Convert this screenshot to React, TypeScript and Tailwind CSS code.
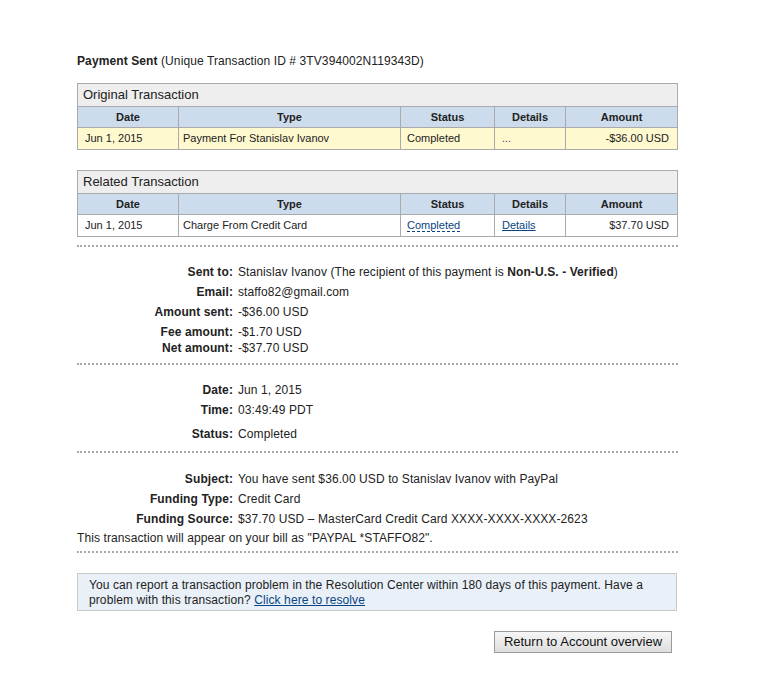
import React from 'react';

interface TxRow {
  date: string;
  type: string;
  status: React.ReactNode;
  details: React.ReactNode;
  amount: string;
}

const font = { fontFamily: '"Liberation Sans", Arial, sans-serif' };

const headers = ['Date', 'Type', 'Status', 'Details', 'Amount'];

const TxTable: React.FC<{ title: string; row: TxRow; highlight?: boolean }> = ({
  title,
  row,
  highlight
}) => {
  const rowBg = highlight ? 'bg-[#fff9cf]' : 'bg-white';
  return (
    <table className="w-[600px] table-fixed border-collapse text-[11px] tracking-normal text-[#222]">
      <colgroup>
        <col className="w-[101px]" />
        <col className="w-[222px]" />
        <col className="w-[94px]" />
        <col className="w-[71px]" />
        <col className="w-[112px]" />
      </colgroup>
      <thead>
        <tr className="h-[23px]">
          <th
            colSpan={5}
            className="border border-[#aaa] bg-[#eee] px-[5px] text-left text-[13px] font-normal"
          >
            {title}
          </th>
        </tr>
        <tr className="h-[21px]">
          {headers.map((h) => (
            <th key={h} className="border border-[#aaa] bg-[#ccdcec] text-center font-bold">
              {h}
            </th>
          ))}
        </tr>
      </thead>
      <tbody>
        <tr className={`h-[22px] ${rowBg}`}>
          <td className="border border-[#aaa] pl-[7px]">{row.date}</td>
          <td className="border border-[#aaa] pl-[4px]">{row.type}</td>
          <td className="border border-[#aaa] pl-[6px]">{row.status}</td>
          <td className="border border-[#aaa] pl-[7px]">{row.details}</td>
          <td className="border border-[#aaa] pr-[8px] text-right">{row.amount}</td>
        </tr>
      </tbody>
    </table>
  );
};

const Dots: React.FC<{ className?: string }> = ({ className = '' }) => (
  <div className={`w-[601px] border-b-2 border-dotted border-[#aaa] ${className}`} />
);

const Field: React.FC<{ label: string; children: React.ReactNode; h?: string }> = ({
  label,
  children,
  h = 'h-[20px] leading-[20px]'
}) => (
  <div className={`flex ${h}`}>
    <div className="w-[156px] shrink-0 text-right font-bold">{label}</div>
    <div className="whitespace-nowrap pl-[5px]">{children}</div>
  </div>
);

export default function App() {
  return (
    <div className="min-h-[700px] bg-white text-[12px] tracking-[0.1px] text-[#222]" style={font}>
      <div className="ml-[77px] w-[600px] pt-[54px]">
        <div className="leading-[14px]">
          <span className="font-bold">Payment Sent</span> (Unique Transaction ID # 3TV394002N119343D)
        </div>

        <div className="mt-[15px]">
          <TxTable
            title="Original Transaction"
            highlight
            row={{
              date: 'Jun 1, 2015',
              type: 'Payment For Stanislav Ivanov',
              status: 'Completed',
              details: <span className="text-[#6b1f7a]">...</span>,
              amount: '-$36.00 USD'
            }}
          />
        </div>

        <div className="mt-[20px]">
          <TxTable
            title="Related Transaction"
            row={{
              date: 'Jun 1, 2015',
              type: 'Charge From Credit Card',
              status: (
                <span className="border-b border-dashed border-[#084482] text-[#084482]">
                  Completed
                </span>
              ),
              details: <span className="text-[#084482] underline">Details</span>,
              amount: '$37.70 USD'
            }}
          />
        </div>

        <Dots className="mt-[8px]" />

        {/* recipient and amounts */}
        <div className="pt-[15px]">
          <Field label="Sent to:">
            Stanislav Ivanov (The recipient of this payment is{' '}
            <span className="font-bold">Non-U.S. - Verified</span>)
          </Field>
          <Field label="Email:">staffo82@gmail.com</Field>
          <Field label="Amount sent:">-$36.00 USD</Field>
          <div className="mt-[2px]">
            <Field label="Fee amount:" h="h-[16px] leading-[16px]">
              -$1.70 USD
            </Field>
            <Field label="Net amount:" h="h-[16px] leading-[16px]">
              -$37.70 USD
            </Field>
          </div>
        </div>

        <Dots className="mt-[7px]" />

        {/* date / time / status */}
        <div className="pt-[15px]">
          <Field label="Date:">Jun 1, 2015</Field>
          <Field label="Time:">03:49:49 PDT</Field>
          <div className="mt-[4px]">
            <Field label="Status:">Completed</Field>
          </div>
        </div>

        <Dots className="mt-[7px]" />

        {/* funding */}
        <div className="pt-[16px]">
          <Field label="Subject:">You have sent $36.00 USD to Stanislav Ivanov with PayPal</Field>
          <Field label="Funding Type:">Credit Card</Field>
          <Field label="Funding Source:">$37.70 USD – MasterCard Credit Card XXXX-XXXX-XXXX-2623</Field>
          <div className="h-[18px] leading-[18px]">
            This transaction will appear on your bill as "PAYPAL *STAFFO82".
          </div>
        </div>

        <Dots className="mt-[4px]" />

        <div className="mt-[20px] border border-[#c8c8c8] bg-[#e9f0f8] pb-[2px] pl-[11px] pr-[8px] pt-[4px] leading-[15px]">
          You can report a transaction problem in the Resolution Center within 180 days of this payment. Have a
          problem with this transaction?{' '}
          <span className="text-[#084482] underline">Click here to resolve</span>
        </div>

        <div className="mt-[20px] flex justify-end pr-[5px]">
          <button className="h-[22px] w-[178px] border border-[#999] bg-gradient-to-b from-[#f6f6f6] to-[#dedede] text-[13px] leading-[20px] tracking-normal text-[#111]">
            Return to Account overview
          </button>
        </div>
      </div>
    </div>
  );
}
